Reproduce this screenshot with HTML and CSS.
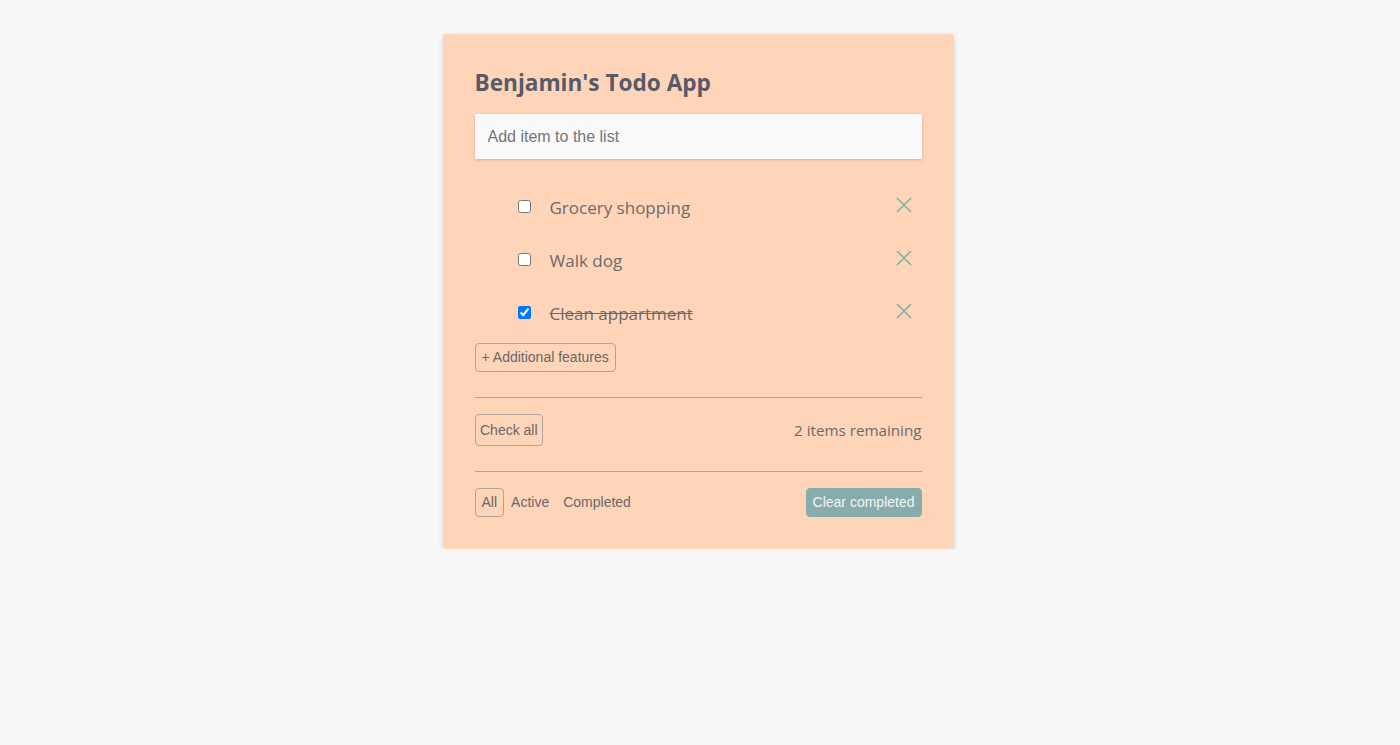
FILE: index.html
```html
<!DOCTYPE html>
<html lang="en">
<head>
<meta charset="utf-8">
<title>Benjamin's Todo App</title>
<link rel="stylesheet" href="styles.css">
</head>
<body>
<main class="card">
  <h1 class="title">Benjamin's Todo App</h1>
  <input class="new-todo" type="text" placeholder="Add item to the list">
  <ul class="todo-list">
    <li class="todo">
      <input class="todo-check" type="checkbox">
      <span class="todo-text">Grocery shopping</span>
      <button class="todo-remove" aria-label="Remove"><svg viewBox="0 0 16 16" width="16" height="16"><path d="M1 1L15 15M15 1L1 15" stroke="currentColor" stroke-width="1.6" fill="none"/></svg></button>
    </li>
    <li class="todo">
      <input class="todo-check" type="checkbox">
      <span class="todo-text">Walk dog</span>
      <button class="todo-remove" aria-label="Remove"><svg viewBox="0 0 16 16" width="16" height="16"><path d="M1 1L15 15M15 1L1 15" stroke="currentColor" stroke-width="1.6" fill="none"/></svg></button>
    </li>
    <li class="todo done">
      <input class="todo-check" type="checkbox" checked>
      <span class="todo-text">Clean appartment</span>
      <button class="todo-remove" aria-label="Remove"><svg viewBox="0 0 16 16" width="16" height="16"><path d="M1 1L15 15M15 1L1 15" stroke="currentColor" stroke-width="1.6" fill="none"/></svg></button>
    </li>
  </ul>
  <div class="extra-row"><button class="btn">+ Additional features</button></div>
  <hr class="divider">
  <div class="row">
    <button class="btn btn-tall">Check all</button>
    <span class="remaining">2 items remaining</span>
  </div>
  <hr class="divider">
  <div class="row">
    <div class="filters">
      <button class="btn filter active">All</button>
      <button class="btn filter">Active</button>
      <button class="btn filter">Completed</button>
    </div>
    <button class="btn btn-clear">Clear completed</button>
  </div>
</main>
</body>
</html>
```
FILE: styles.css
```css
* { box-sizing: border-box; }
html, body { margin: 0; padding: 0; }
body {
  background: #f9f8f8;
  font-family: "Open Sans", "Noto Sans", sans-serif;
  color: #6b6768;
}
.card {
  width: 511px;
  margin: 34px auto 0;
  position: relative;
  left: -2px;
  background: #fed5b9;
  border-radius: 3px;
  padding: 34px 32px 32px;
  box-shadow: 0 2px 6px rgba(0,0,0,0.14);
}
.title {
  margin: 0 0 16px;
  font-size: 22.6px;
  line-height: 30px;
  font-weight: 700;
  color: #575a69;
}
.new-todo {
  display: block;
  width: 100%;
  height: 45px;
  border: none;
  outline: none;
  padding: 0 13px;
  background: #faf9f9;
  font-family: "Liberation Sans", Arial, sans-serif;
  font-size: 16px;
  color: #555;
  box-shadow: 0 1px 3px rgba(0,0,0,0.18);
}
.new-todo::placeholder { color: #757575; }
.todo-list {
  list-style: none;
  margin: 21px 0 0;
  padding: 0;
}
.todo {
  height: 53px;
  display: flex;
  align-items: center;
  padding-left: 43px;
  padding-right: 10px;
}
.todo-check {
  width: 13px;
  height: 13px;
  margin: 0 19px 0 0;
}
.todo-text {
  flex: 1;
  font-size: 17px;
  color: #6e6a6b;
  margin-top: 2px;
}
.done .todo-text { text-decoration: line-through; }
.todo-remove {
  background: none;
  border: none;
  padding: 0;
  width: 16px;
  height: 16px;
  color: #88aea9;
  margin-top: -3px;
  display: flex;
}
.extra-row { margin-top: 4px; }
.btn {
  display: inline-flex;
  align-items: center;
  height: 29px;
  font-family: "Liberation Sans", Arial, sans-serif;
  font-size: 14px;
  line-height: 17px;
  color: #6b6768;
  background: transparent;
  border: 1px solid #b0a49b;
  border-radius: 4px;
  padding: 0 6px;
}
.divider {
  border: none;
  border-top: 1px solid #a9a5a2;
  margin: 25px 0 16px;
  height: 0;
}
.row {
  display: flex;
  align-items: center;
  justify-content: space-between;
}
.btn-tall { height: 32px; padding: 0 4.5px; }
.remaining { font-size: 15.2px; color: #6e6a6b; }
.filters { display: flex; align-items: center; }
.filter { border-color: transparent; }
.filter.active { border-color: #b0a49b; }
.btn-clear {
  background: #86adab;
  border-color: #86adab;
  color: #f4f4f4;
}
```
